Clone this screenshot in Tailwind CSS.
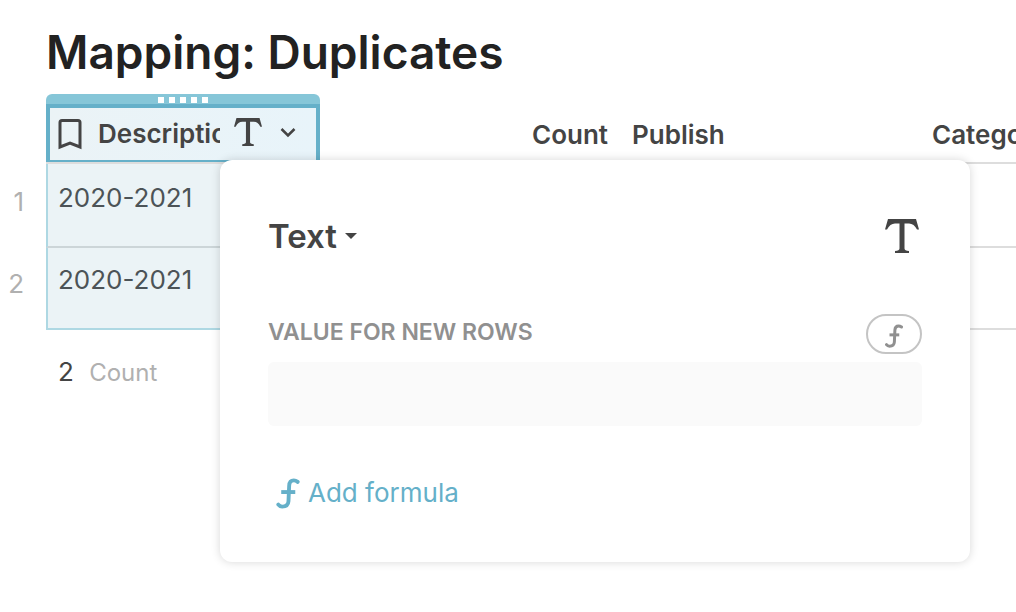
<!doctype html>
<html lang="en">

<head>
    <meta charset="UTF-8">
    <meta name="viewport" content="width=device-width, initial-scale=1.0">
    <title>Mapping: Duplicates</title>
    <script src="https://cdn.jsdelivr.net/npm/@tailwindcss/browser@4"></script>
</head>

<body class="relative min-h-screen overflow-x-hidden bg-white font-['Inter',sans-serif] text-[26px] leading-8 text-[#444]">

    <h1 class="pt-4 pb-1.5 pl-[46px] text-[46px] leading-[72px] font-semibold text-[#222]">Mapping: Duplicates</h1>

    <!-- Table -->
    <table class="w-full table-fixed border-separate border-spacing-0">
        <colgroup>
            <col class="w-[46px]">
            <col class="w-[274px]">
            <col class="w-[300px]">
            <col class="w-[300px]">
            <col>
        </colgroup>
        <thead>
            <tr class="h-[70px]">
                <td></td>
                <th class="border-b-2 border-[#ddd] p-0 align-top">
                    <!-- Drag handle -->
                    <div class="flex h-2.5 items-end justify-center gap-[5px] rounded-t-md bg-[#86c6d8] pb-px">
                        <span class="size-1.5 bg-white"></span>
                        <span class="size-1.5 bg-white"></span>
                        <span class="size-1.5 bg-white"></span>
                        <span class="size-1.5 bg-white"></span>
                        <span class="size-1.5 bg-white"></span>
                    </div>
                    <div class="flex h-[58px] items-center border-4 border-b-2 border-[#65b0c9] bg-linear-to-r from-[#ebf3f6] to-[#e8f4fa] pl-2">
                        <svg class="h-8 w-6 shrink-0" viewBox="0 0 24 32" fill="none" stroke="currentColor" stroke-width="3">
                            <path d="M2 29V4.500Q2 2.500 4 2.500H20Q22 2.500 22 4.500V29L12 25Z" />
                        </svg>
                        <span class="ml-4 w-[122px] overflow-hidden text-left font-semibold whitespace-nowrap">Description</span>
                        <svg class="mb-1 ml-3.5 h-7 w-7 shrink-0" viewBox="0 0 34 34" fill="currentColor">
                            <path d="M3 0H31L34 10.500H32Q29 4.500 24 4.500H19.500V29.500Q19.500 31.500 24 32V34H10V32Q14.500 31.500 14.500 29.500V4.500H10Q5 4.500 2 10.500H0Z" />
                        </svg>
                        <button type="button" class="mb-1 ml-[18px]" aria-label="Column options">
                            <svg class="h-4 w-4" viewBox="0 0 16 16" fill="none" stroke="currentColor" stroke-width="2.500">
                                <path d="M1.500 5L8 11.500L14.500 5" />
                            </svg>
                        </button>
                    </div>
                </th>
                <th class="border-b-2 border-[#ddd] px-3 pt-3.5 text-right font-semibold">Count</th>
                <th class="border-b-2 border-[#ddd] px-3 pt-3.5 text-left font-semibold">Publish</th>
                <th class="border-b-2 border-[#ddd] px-3 pt-3.5 text-left font-semibold">Category</th>
            </tr>
        </thead>
        <tbody>
            <tr class="h-[84px]">
                <td class="pt-[22px] pr-[22px] text-right align-top text-[#b0b0b0]">1</td>
                <td class="border-b-2 border-l-2 border-b-[#ccd5d8] border-l-[#aed8e3] bg-[#ebf3f6] pt-[18px] pl-2.5 align-top text-[#4c5357]">2020-2021</td>
                <td class="border-b-2 border-[#ddd]"></td>
                <td class="border-b-2 border-[#ddd]"></td>
                <td class="border-b-2 border-[#ddd]"></td>
            </tr>
            <tr class="h-[82px]">
                <td class="pt-5 pr-[22px] text-right align-top text-[#b0b0b0]">2</td>
                <td class="border-b-2 border-l-2 border-[#aed8e3] bg-[#ebf3f6] pt-4 pl-2.5 align-top text-[#4c5357]">2020-2021</td>
                <td class="border-b-2 border-[#ddd]"></td>
                <td class="border-b-2 border-[#ddd]"></td>
                <td class="border-b-2 border-[#ddd]"></td>
            </tr>
        </tbody>
        <tfoot>
            <tr>
                <td></td>
                <td class="pt-[26px] pl-3">2 <span class="ml-2 text-2xl text-[#b0b0b0]">Count</span></td>
            </tr>
        </tfoot>
    </table>

    <!-- Column settings popover -->
    <div class="absolute top-40 left-[220px] w-[750px] rounded-xl bg-white px-12 pt-12 pb-[51px] shadow-[0_0_10px_rgba(0,0,0,0.16)]">
        <div class="flex h-14 items-center justify-between">
            <button type="button" class="flex items-center gap-2 text-[33px] leading-10 font-semibold">
                Text
                <svg class="h-1.5 w-3" viewBox="0 0 14 7" fill="currentColor">
                    <path d="M0 0H14L7 7Z" />
                </svg>
            </button>
            <svg class="mr-[3px] h-[34px] w-[34px]" viewBox="0 0 34 34" fill="currentColor">
                <path d="M3 0H31L34 10.500H32Q29 4.500 24 4.500H19.500V29.500Q19.500 31.500 24 32V34H10V32Q14.500 31.500 14.500 29.500V4.500H10Q5 4.500 2 10.500H0Z" />
            </svg>
        </div>

        <div class="mt-[50px] flex h-10 items-center justify-between">
            <label for="default-value" class="pb-1 text-[23px] font-semibold text-[#909090]">VALUE FOR NEW ROWS</label>
            <button type="button" class="flex h-10 w-14 items-center justify-center rounded-full border-2 border-[#c4c4c4] text-[#909090]" aria-label="Use a formula">
                <svg class="mt-1 h-6 w-[18px]" viewBox="0 0 24 32" fill="none" stroke="currentColor" stroke-width="4" stroke-linecap="round">
                    <path d="M22 4Q20 2.500 18 2.500Q13.500 2.500 13.200 8L12.500 24Q12.200 29.500 6 29.500Q3.500 29.500 2 27.500" />
                    <path d="M6 14.500H19" stroke-linecap="butt" />
                </svg>
            </button>
        </div>
        <input id="default-value" type="text" class="mt-2 block h-16 w-full rounded-md bg-[#fafafa] px-4 outline-none">

        <button type="button" class="mt-[49px] ml-2 flex h-9 items-center gap-2 text-[#65b0c9]">
            <svg class="h-[31px] w-6" viewBox="0 0 24 32" fill="none" stroke="currentColor" stroke-width="4" stroke-linecap="round">
                <path d="M22 4Q20 2.500 18 2.500Q13.500 2.500 13.200 8L12.500 24Q12.200 29.500 6 29.500Q3.500 29.500 2 27.500" />
                <path d="M5 14.500H19.500" stroke-linecap="butt" />
            </svg>
            Add formula
        </button>
    </div>

</body>

</html>
